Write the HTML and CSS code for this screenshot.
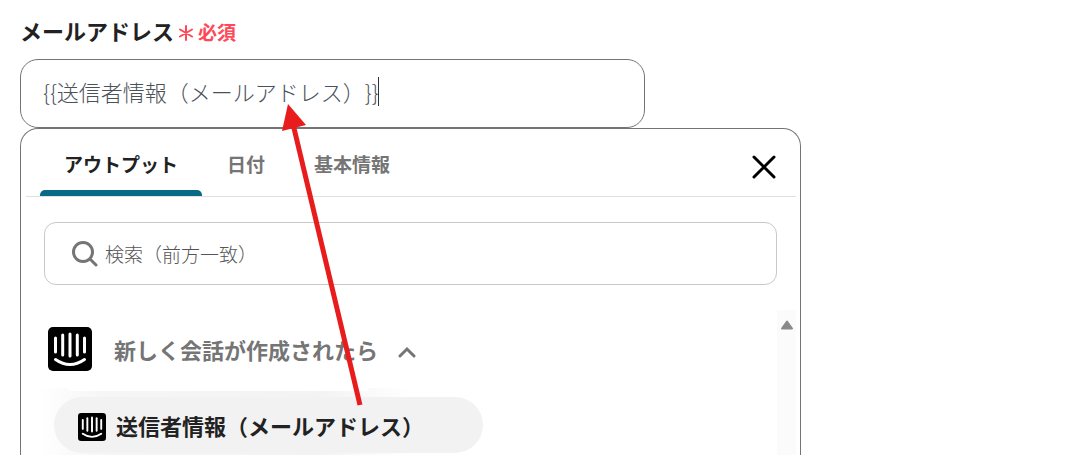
FILE: index.html
```html
<!DOCTYPE html>
<html lang="ja">
<head>
<meta charset="utf-8">
<meta name="viewport" content="width=device-width, initial-scale=1">
<title>メールアドレス</title>
<link rel="stylesheet" href="styles.css">
</head>
<body>
<main class="form">
  <label class="field-label" for="email">
    <span class="field-name">メールアドレス</span>
    <span class="required">
      <svg class="asterisk" viewBox="0 0 14 16" aria-hidden="true"><path d="M7 1v14M1 4.500l12 7M13 4.500l-12 7"/></svg>
      必須
    </span>
  </label>
  <div class="field">
    <input class="field-input" id="email" type="text" value="{{送信者情報（メールアドレス）}}">
    <span class="caret"></span>
  </div>

  <section class="panel">
    <header class="panel-head">
      <nav class="tabs">
        <button class="tab tab-active" type="button">アウトプット</button>
        <button class="tab" type="button">日付</button>
        <button class="tab" type="button">基本情報</button>
      </nav>
      <button class="close" type="button" aria-label="閉じる">
        <svg viewBox="0 0 24 24"><path d="M2 2l20 20M22 2L2 22"/></svg>
      </button>
    </header>

    <div class="search">
      <svg class="search-icon" viewBox="0 0 26 26" aria-hidden="true"><circle cx="11" cy="11" r="9.500"/><path d="M18 18l6 6"/></svg>
      <input class="search-input" type="text" aria-label="検索" placeholder="検索（前方一致）">
    </div>

    <div class="results">
      <div class="list">
        <button class="group" type="button">
          <svg class="logo" viewBox="0 0 44 44" aria-hidden="true"><rect width="44" height="44" rx="5"/><path d="M7.500 11v14M14.700 8v20M22 7v22M29.300 8v20M36.500 11v14M7.500 32.500q14.500 10 29 0"/></svg>
          <span>新しく会話が作成されたら</span>
          <svg class="chevron" viewBox="0 0 18 12" aria-hidden="true"><path d="M2 10l7-7 7 7"/></svg>
        </button>
        <div class="item-row">
          <button class="item" type="button">
            <svg class="logo logo-small" viewBox="0 0 44 44" aria-hidden="true"><rect width="44" height="44" rx="5"/><path d="M7.500 11v14M14.700 8v20M22 7v22M29.300 8v20M36.500 11v14M7.500 32.500q14.500 10 29 0"/></svg>
            <span>送信者情報（メールアドレス）</span>
          </button>
        </div>
      </div>
      <div class="scrollbar"><svg class="scroll-up" viewBox="0 0 14 10" aria-hidden="true"><path d="M7 1.500L12 8.500H2z"/></svg></div>
    </div>
  </section>
  <svg class="arrow" viewBox="0 0 90 305" aria-hidden="true"><path class="arrow-line" d="M80 301L13 20"/><path class="arrow-head" d="M8 0l18 21-24 6z"/></svg>
</main>
</body>
</html>
```
FILE: styles.css
```css
* { box-sizing: border-box; }

body {
  margin: 0;
  background: #fff;
  color: #222;
  font-family: "Noto Sans CJK JP", sans-serif;
  text-spacing-trim: space-all;
}

button, input { font: inherit; }

button {
  border: 0;
  padding: 0;
  background: none;
  color: inherit;
}

svg {
  display: block;
  flex: none;
  fill: none;
  stroke: currentColor;
  stroke-linecap: round;
}

.form {
  position: relative;
  display: flex;
  flex-direction: column;
  height: 100vh;
  max-width: 821px;
  padding: 14px 20px 0;
  overflow: hidden;
}

.field-label {
  display: flex;
  align-items: center;
  gap: 5px;
  height: 32px;
  margin-bottom: 13px;
  font-weight: 700;
}

.field-name { font-size: 22px; }

.required {
  display: flex;
  align-items: center;
  gap: 5px;
  padding-top: 2px;
  color: #ff4757;
  font-size: 19px;
}

.asterisk {
  width: 14px;
  height: 16px;
  margin-top: 4px;
  stroke-width: 2;
}

.field {
  position: relative;
  width: 80%;
}

.field-input {
  display: block;
  width: 100%;
  height: 69px;
  padding: 0 22px 6px;
  border: 1px solid #747474;
  border-radius: 18px;
  outline: 0;
  color: #4b5159;
  font-size: 22px;
  font-weight: 300;
  text-spacing-trim: space-all;
}

.caret {
  position: absolute;
  top: 18px;
  left: 358px;
  width: 1px;
  height: 29px;
  background: #333;
}

.panel {
  display: flex;
  flex: 1;
  flex-direction: column;
  min-height: 0;
  border: 1px solid #747474;
  border-bottom: 0;
  border-radius: 18px 18px 0 0;
}

.panel-head {
  display: flex;
  flex: none;
  align-items: center;
  justify-content: space-between;
  height: 68px;
  margin: 0 4px 0 5px;
  padding: 0 20px 0 14px;
  border-bottom: 1px solid #e0e0e0;
}

.tabs {
  display: flex;
  align-self: stretch;
  gap: 1px;
}

.tab {
  padding: 8px 24px 0;
  border-bottom: 6px solid transparent;
  color: #757575;
  font-size: 19px;
  font-weight: 700;
}

.tab-active {
  position: relative;
  color: #222;
}

.tab-active::after {
  content: "";
  position: absolute;
  right: 0;
  bottom: -6px;
  left: 0;
  height: 6px;
  border-radius: 5px 5px 0 0;
  background: #086a87;
}

.close {
  margin-top: 8px;
  color: #000;
}

.close svg {
  width: 24px;
  height: 24px;
  stroke-width: 3;
}

.search {
  display: flex;
  flex: none;
  align-items: center;
  gap: 7px;
  height: 63px;
  margin: 25px 23px;
  padding: 0 27px;
  border: 1px solid #c8c8c8;
  border-radius: 12px;
}

.search-icon {
  width: 26px;
  height: 26px;
  color: #757575;
  stroke-width: 3;
}

.search-input {
  flex: 1;
  min-width: 0;
  padding: 0;
  border: 0;
  outline: 0;
  background: none;
  font-size: 19px;
  font-weight: 300;
}

.search-input::placeholder { color: #555; }

.results {
  display: flex;
  flex: 1;
  min-height: 0;
  padding-right: 4px;
}

.list {
  flex: 1;
  min-width: 0;
  padding: 17px 19px 0;
}

.group {
  display: flex;
  align-items: center;
  padding-left: 8px;
  gap: 22px;
  color: #757575;
  font-size: 22px;
  font-weight: 700;
}

.group span { margin-right: -2px; }

.logo {
  width: 44px;
  height: 44px;
  color: #fff;
  stroke-width: 3;
}

.logo rect {
  fill: #000;
  stroke: none;
}

.logo-small {
  width: 28px;
  height: 28px;
  margin-top: 4px;
}

.chevron {
  width: 18px;
  height: 12px;
  margin-top: 6px;
  stroke-width: 3;
}

.item-row {
  position: relative;
  display: flex;
  margin-top: 17px;
  padding: 9px 14px 4px;
  background: linear-gradient(90deg, #fff, #f6f6f6 60px, #f3f3f3 280px, #fff 370px);
}

.item-row::before {
  content: "";
  position: absolute;
  top: 0;
  left: 28px;
  width: 300px;
  height: 3px;
  border-radius: 0 0 12px 12px;
  background: #fff;
}

.item {
  display: flex;
  align-items: center;
  gap: 10px;
  height: 56px;
  padding: 0 59px 0 24px;
  border-radius: 28px;
  background: #f2f2f2;
  font-size: 22px;
  font-weight: 700;
}

.scrollbar {
  width: 19px;
  padding: 10px 3px;
  background: #fbfbfb;
}

.scroll-up {
  width: 14px;
  height: 10px;
  color: #8a8a8a;
  fill: #8a8a8a;
  stroke-width: 2;
  stroke-linejoin: round;
}

.arrow {
  position: absolute;
  top: 104px;
  left: 280px;
  width: 90px;
  height: 305px;
  color: #e81c1c;
}

.arrow-line {
  stroke-width: 5;
  stroke-linecap: butt;
}

.arrow-head {
  fill: #e81c1c;
  stroke: none;
}
```
